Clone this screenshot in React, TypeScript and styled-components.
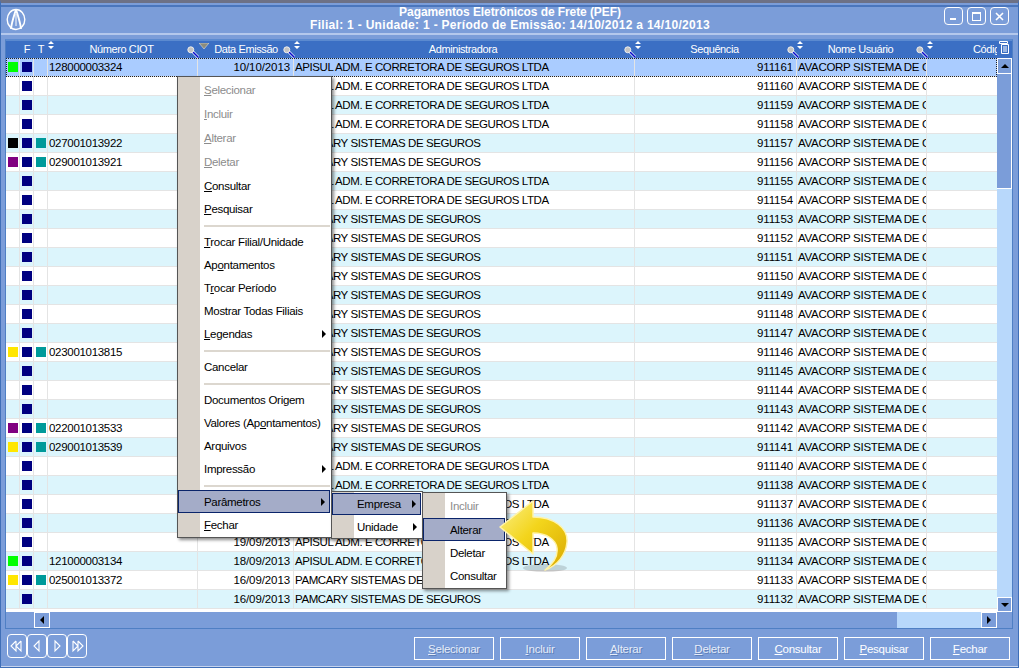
import React from "react";
import styled, { createGlobalStyle } from "styled-components";

const GlobalStyle = createGlobalStyle`
  html, body {
    margin: 0;
    padding: 0;
    background: #7b9dd9;
    overflow: hidden;
  }
  * {
    box-sizing: border-box;
  }
`;

const GRID_COLUMNS = "14px 14px 14px 150px 96px 341px 162px 130px 70px";
const FONT = `"Liberation Sans", Arial, sans-serif`;

type Row = {
  ciot?: string;
  date: string;
  admin: "A" | "P";
  seq: number;
  flag?: string;
  teal?: boolean;
};

const ADMIN = {
  A: "APISUL ADM. E CORRETORA DE SEGUROS LTDA",
  P: "PAMCARY SISTEMAS DE SEGUROS",
};

const rows: Row[] = [
  { ciot: "128000003324", date: "10/10/2013", admin: "A", seq: 911161, flag: "#00ff00" },
  { date: "10/10/2013", admin: "A", seq: 911160 },
  { date: "10/10/2013", admin: "A", seq: 911159 },
  { date: "10/10/2013", admin: "A", seq: 911158 },
  { ciot: "027001013922", date: "10/10/2013", admin: "P", seq: 911157, flag: "#000000", teal: true },
  { ciot: "029001013921", date: "10/10/2013", admin: "P", seq: 911156, flag: "#800080", teal: true },
  { date: "09/10/2013", admin: "A", seq: 911155 },
  { date: "09/10/2013", admin: "A", seq: 911154 },
  { date: "09/10/2013", admin: "P", seq: 911153 },
  { date: "09/10/2013", admin: "P", seq: 911152 },
  { date: "09/10/2013", admin: "P", seq: 911151 },
  { date: "09/10/2013", admin: "P", seq: 911150 },
  { date: "09/10/2013", admin: "P", seq: 911149 },
  { date: "09/10/2013", admin: "P", seq: 911148 },
  { date: "09/10/2013", admin: "P", seq: 911147 },
  { ciot: "023001013815", date: "09/10/2013", admin: "P", seq: 911146, flag: "#ffe600", teal: true },
  { date: "09/10/2013", admin: "P", seq: 911145 },
  { date: "09/10/2013", admin: "P", seq: 911144 },
  { date: "09/10/2013", admin: "P", seq: 911143 },
  { ciot: "022001013533", date: "09/10/2013", admin: "P", seq: 911142, flag: "#800080", teal: true },
  { ciot: "029001013539", date: "09/10/2013", admin: "P", seq: 911141, flag: "#ffe600", teal: true },
  { date: "19/09/2013", admin: "A", seq: 911140 },
  { date: "19/09/2013", admin: "A", seq: 911138 },
  { date: "19/09/2013", admin: "A", seq: 911137 },
  { date: "19/09/2013", admin: "A", seq: 911136 },
  { date: "19/09/2013", admin: "A", seq: 911135 },
  { ciot: "121000003134", date: "18/09/2013", admin: "A", seq: 911134, flag: "#00ff00" },
  { ciot: "025001013372", date: "16/09/2013", admin: "P", seq: 911133, flag: "#ffe600", teal: true },
  { date: "16/09/2013", admin: "P", seq: 911132 },
];

const Page = styled.div`
  position: relative;
  width: 1019px;
  height: 668px;
  display: flex;
  flex-direction: column;
  background: #7b9dd9;
  border: 1px solid #3f6fb8;
  border-top: 3px solid #6d7186;
  border-bottom: 1px solid #3f6fb8;
  box-shadow: inset 0 -1px 0 #c6d4ee;
  font-family: ${FONT};
  overflow: hidden;
`;

const TitleBar = styled.header`
  height: 30px;
  flex: none;
  margin-top: 2px;
  padding: 0 9px 0 5px;
  display: flex;
  align-items: flex-start;
  justify-content: space-between;
  border-top: 2px solid #4a76bd;
  border-bottom: 2px solid #b4c8ec;
`;

const LogoSlot = styled.div`
  width: 20px;
  height: 23px;
  margin-top: 1px;
  flex: none;
  line-height: 0;
`;

const TitleText = styled.div`
  flex: 1;
  padding: 0 0 0 50px;
  margin-top: -1px;
  text-align: center;
  color: #fff;
  font-size: 12px;
  font-weight: 700;
  line-height: 13px;
`;

const TitleLine = styled.div<{ $spacing: number }>`
  letter-spacing: ${(p) => p.$spacing}px;
  white-space: nowrap;
`;

const WindowButtons = styled.div`
  display: flex;
  gap: 4px;
`;

const WindowButton = styled.button`
  width: 19px;
  height: 18px;
  padding: 0;
  display: flex;
  align-items: center;
  justify-content: center;
  background: transparent;
  border: 1px solid #fff;
  border-radius: 4px;
`;

const GridFrame = styled.section`
  margin: 4px 5px 0 4px;
  height: 590px;
  flex: none;
  display: flex;
  flex-direction: column;
  border: 1px solid #4f7fc4;
  border-top: 2px solid #5b8ad0;
`;

const GridBody = styled.div`
  height: 571px;
  flex: none;
  display: flex;
`;

const Table = styled.div`
  width: 991px;
  overflow: hidden;
  display: flex;
  flex-direction: column;
  background: #fff;
  border-bottom: 2px solid #fff;
`;

const HeaderRow = styled.div`
  height: 17px;
  flex: none;
  display: grid;
  grid-template-columns: ${GRID_COLUMNS};
  background: #3b6fc4;
  color: #fff;
  font-size: 11px;
  line-height: 17px;
`;

const HeaderCell = styled.div`
  position: relative;
  text-align: center;
  white-space: nowrap;
  letter-spacing: -0.4px;
`;

const ColumnCell = styled(HeaderCell)`
  padding-right: 3px;
`;

const ClippedHeaderCell = styled(HeaderCell)`
  overflow: hidden;
  text-align: left;
  padding-left: 46px;
`;

const HeaderMark = styled.span<{ $left: number; $top?: number }>`
  position: absolute;
  top: ${(p) => p.$top ?? 0}px;
  left: ${(p) => p.$left}px;
  line-height: 0;
  z-index: 1;
`;

const BodyRows = styled.div`
  flex: 1;
  overflow: hidden;
  background: #fff;
`;

const DataRow = styled.div<{ $alt: boolean; $selected: boolean }>`
  height: 19px;
  display: grid;
  grid-template-columns: ${GRID_COLUMNS};
  font-size: 11.5px;
  line-height: 18px;
  color: #000;
  background: ${(p) => (p.$selected ? "#aaccff" : p.$alt ? "#dcf5fc" : "#fff")};
  outline: ${(p) => (p.$selected ? "1px dotted #222" : "none")};
  outline-offset: -1px;
`;

const Cell = styled.div<{ $right?: boolean; $plain?: boolean }>`
  border-right: ${(p) => (p.$plain ? "none" : "1px solid #e4e4e4")};
  border-bottom: 1px solid #e4e4e4;
  padding: 0 ${(p) => (p.$right ? "3px" : "0")} 0 1px;
  text-align: ${(p) => (p.$right ? "right" : "left")};
  white-space: nowrap;
  overflow: hidden;
  letter-spacing: ${(p) => (p.$right ? "-0.1px" : "-0.3px")};
`;

const AdminCell = styled(Cell)`
  letter-spacing: -0.42px;
`;

const SwatchCell = styled.div`
  border-right: 1px solid #e4e4e4;
  border-bottom: 1px solid #e4e4e4;
  display: flex;
  align-items: center;
  justify-content: center;
`;

const Swatch = styled.span<{ $color: string }>`
  width: 10px;
  height: 10px;
  background: ${(p) => p.$color};
`;

const VScroll = styled.div`
  width: 15px;
  flex: none;
  display: flex;
  flex-direction: column;
  background: #7b9dd9;
`;

const VScrollHeader = styled.div`
  height: 17px;
  flex: none;
  padding: 0 0 0 2px;
  background: #3b6fc4;
  line-height: 0;
`;

const ScrollArrow = styled.div<{ $w?: number; $h?: number }>`
  width: ${(p) => p.$w ?? 15}px;
  height: ${(p) => p.$h ?? 16}px;
  flex: none;
  display: flex;
  align-items: center;
  justify-content: center;
  background: #7b9dd9;
  border: 1px solid #fff;
`;

const VBar = styled.div`
  flex: 1;
  display: flex;
  flex-direction: column;
  background: #b8d8fb;
`;

const VThumb = styled.div`
  height: 115px;
  flex: none;
  background: #7b9dd9;
  border-right: 1px solid #fff;
  border-bottom: 1px solid #fff;
`;

const HScroll = styled.div`
  height: 16px;
  flex: none;
  display: flex;
  background: #7b9dd9;
`;

const HSpacer = styled.div`
  width: 28px;
  flex: none;
`;

const HThumb = styled.div`
  width: 847px;
  flex: none;
`;

const HTrack = styled.div`
  width: 84px;
  flex: none;
  background: #b8d8fb;
`;

const HCorner = styled.div`
  flex: 1;
`;

const Footer = styled.footer`
  flex: 1;
  display: flex;
  align-items: flex-start;
  justify-content: space-between;
  padding: 5px 8px 0 6px;
`;

const Pager = styled.div`
  display: flex;
`;

const PagerButton = styled.button`
  width: 20px;
  height: 24px;
  padding: 0;
  display: flex;
  align-items: center;
  justify-content: center;
  background: transparent;
  border: 1px solid #fff;
  border-radius: 4px;
`;

const Actions = styled.div`
  display: flex;
  gap: 6px;
  margin-top: 3px;
`;

const ActionButton = styled.button<{ $disabled?: boolean }>`
  width: 80px;
  height: 23px;
  padding: 0;
  background: transparent;
  border: 1px solid #fff;
  color: ${(p) => (p.$disabled ? "#e6edfa" : "#fff")};
  font-family: ${FONT};
  font-size: 11.5px;
  letter-spacing: -0.25px;
  text-shadow: ${(p) => (p.$disabled ? "1px 1px 0 #5e7fb8" : "none")};
`;

const Menu = styled.div<{ $x: number; $y: number; $w: number; $h: number; $z: number }>`
  position: absolute;
  left: ${(p) => p.$x}px;
  top: ${(p) => p.$y}px;
  width: ${(p) => p.$w}px;
  height: ${(p) => p.$h}px;
  z-index: ${(p) => p.$z};
  display: flex;
  flex-direction: column;
  padding: 1px 1px 0;
  background: linear-gradient(90deg, #d8d2ca 22px, #fff 22px);
  border: 1px solid #555;
  box-shadow: 2px 2px 3px rgba(0, 0, 0, 0.45);
  font-size: 11.5px;
  letter-spacing: -0.3px;
`;

const Item = styled.div<{ $h: number; $pad: number; $disabled?: boolean; $active?: boolean; $pt?: number }>`
  position: relative;
  height: ${(p) => p.$h}px;
  flex: none;
  display: flex;
  align-items: center;
  padding-left: ${(p) => p.$pad}px;
  padding-top: ${(p) => p.$pt ?? 0}px;
  color: ${(p) => (p.$disabled ? "#8c8c8c" : "#000")};
  background: ${(p) => (p.$active ? "#a4acc8" : "transparent")};
  border: ${(p) => (p.$active ? "1px solid #0a246a" : "none")};
  margin-left: ${(p) => (p.$active ? "-1px" : "0")};
  white-space: nowrap;
`;

const Separator = styled.div`
  height: 10px;
  flex: none;
  padding-top: 5px;
  margin-left: 25px;
  &::after {
    content: "";
    display: block;
    height: 2px;
    background: #dcd7cf;
  }
`;

const Caret = styled.span`
  position: absolute;
  right: 4px;
  top: 50%;
  margin-top: -4px;
  width: 0;
  height: 0;
  border-left: 4px solid #000;
  border-top: 4px solid transparent;
  border-bottom: 4px solid transparent;
`;

const ArrowMark = styled.svg`
  position: absolute;
  left: 498px;
  top: 497px;
  z-index: 5;
`;

const Logo = () => (
  <svg width="20" height="23" viewBox="0 0 20 23" fill="none" stroke="#fff">
    <ellipse cx="10" cy="11.5" rx="8.8" ry="10" strokeWidth="1.4" />
    <path d="M10 1.5 C8 8 5.5 15 5 21 M10 1.5 C12 8 14.5 15 15 21" strokeWidth="1.9" />
    <path d="M10 6 V18" strokeWidth="1" />
  </svg>
);

const SortMark = () => (
  <svg width="6" height="8" viewBox="0 0 6 8" fill="#fff">
    <path d="M3 0 L6 3 H0 Z M0 5 H6 L3 8 Z" />
  </svg>
);

const Magnifier = () => (
  <svg width="12" height="12" viewBox="0 0 12 12">
    <line x1="5" y1="5" x2="11.5" y2="11.5" stroke="#dfe8ff" strokeWidth="3" />
    <line x1="5" y1="5" x2="11.5" y2="11.5" stroke="#0a0ac8" strokeWidth="1.5" />
    <circle cx="3.8" cy="3.8" r="3" fill="#c4c4c4" stroke="#eee" strokeWidth="1" />
  </svg>
);

const OrderMark = () => (
  <svg width="11" height="13" viewBox="0 0 11 13" fill="none" stroke="#fff">
    <path d="M0.5 0.5 H8.5 V2.5 H0.5 Z" fill="#3b6fc4" />
    <path d="M2.5 3.5 H9.5 V12.5 H2.5 Z" fill="#3b6fc4" />
    <path d="M4 6 H8 M4 8 H8 M4 10 H8" />
  </svg>
);

const Triangle = ({ dir }: { dir: "up" | "down" | "left" | "right" }) => {
  const d = {
    up: "M0 5 L4 1 L8 5 Z",
    down: "M0 1 H8 L4 5 Z",
    left: "M5 0 V8 L1 4 Z",
    right: "M1 0 V8 L5 4 Z",
  }[dir];
  const vertical = dir === "up" || dir === "down";
  return (
    <svg width={vertical ? 8 : 6} height={vertical ? 6 : 8} viewBox={vertical ? "0 0 8 6" : "0 0 6 8"} fill="#000">
      <path d={d} />
    </svg>
  );
};

const PagerIcon = ({ d }: { d: string }) => (
  <svg width="16" height="14" viewBox="0 0 16 14" fill="none" stroke="#fff" strokeWidth="1.1">
    <path d={d} />
  </svg>
);

function Mnemonic({ text, at = 0 }: { text: string; at?: number }) {
  return (
    <span>
      {text.slice(0, at)}
      <u>{text[at]}</u>
      {text.slice(at + 1)}
    </span>
  );
}

export default function App() {
  return (
    <Page>
      <GlobalStyle />
      <TitleBar>
        <LogoSlot><Logo /></LogoSlot>
        <TitleText>
          <TitleLine $spacing={-0.08}>Pagamentos Eletrônicos de Frete (PEF)</TitleLine>
          <TitleLine $spacing={0.3}>Filial: 1 - Unidade: 1 - Período de Emissão: 14/10/2012 a 14/10/2013</TitleLine>
        </TitleText>
        <WindowButtons>
          <WindowButton>
            <svg width="9" height="9" viewBox="0 0 9 9"><rect x="1" y="6" width="6" height="2" fill="#fff" /></svg>
          </WindowButton>
          <WindowButton>
            <svg width="11" height="11" viewBox="0 0 11 11" fill="none" stroke="#fff"><rect x="1.5" y="1.5" width="8" height="8" /><line x1="1" y1="2" x2="10" y2="2" strokeWidth="2" /></svg>
          </WindowButton>
          <WindowButton>
            <svg width="9" height="9" viewBox="0 0 9 9" stroke="#fff" strokeWidth="1.6"><path d="M1 1 L8 8 M8 1 L1 8" /></svg>
          </WindowButton>
        </WindowButtons>
      </TitleBar>

      <GridFrame>
        <GridBody>
          <Table>
            <HeaderRow>
              <HeaderCell />
              <HeaderCell>F</HeaderCell>
              <HeaderCell>
                T
                <HeaderMark $left={14}><SortMark /></HeaderMark>
              </HeaderCell>
              <ColumnCell>
                Número CIOT
                <HeaderMark $left={139} $top={5}><Magnifier /></HeaderMark>
              </ColumnCell>
              <HeaderCell>
                Data Emissão
                <HeaderMark $left={1} $top={2}>
                  <svg width="10" height="6" viewBox="0 0 10 6"><path d="M0 0 H10 L5 6 Z" fill="#8c8c7c" stroke="#ddd" strokeWidth="0.6" /></svg>
                </HeaderMark>
                <HeaderMark $left={85} $top={5}><Magnifier /></HeaderMark>
              </HeaderCell>
              <ColumnCell>
                <HeaderMark $left={0}><SortMark /></HeaderMark>
                Administradora
                <HeaderMark $left={330} $top={5}><Magnifier /></HeaderMark>
              </ColumnCell>
              <ColumnCell>
                <HeaderMark $left={0}><SortMark /></HeaderMark>
                Sequência
                <HeaderMark $left={152} $top={5}><Magnifier /></HeaderMark>
              </ColumnCell>
              <ColumnCell>
                <HeaderMark $left={0}><SortMark /></HeaderMark>
                Nome Usuário
                <HeaderMark $left={119} $top={5}><Magnifier /></HeaderMark>
              </ColumnCell>
              <ClippedHeaderCell>
                <HeaderMark $left={0}><SortMark /></HeaderMark>
                Código
              </ClippedHeaderCell>
            </HeaderRow>
            <BodyRows>
              {rows.map((r, i) => (
                <DataRow key={r.seq} $alt={i % 2 === 0} $selected={i === 0}>
                  <SwatchCell>{r.flag && <Swatch $color={r.flag} />}</SwatchCell>
                  <SwatchCell><Swatch $color="#000080" /></SwatchCell>
                  <SwatchCell>{r.teal && <Swatch $color="#009a9a" />}</SwatchCell>
                  <Cell>{r.ciot}</Cell>
                  <Cell $right>{r.date}</Cell>
                  <AdminCell>{ADMIN[r.admin]}</AdminCell>
                  <Cell $right>{r.seq}</Cell>
                  <Cell>AVACORP SISTEMA DE C</Cell>
                  <Cell $plain />
                </DataRow>
              ))}
            </BodyRows>
          </Table>
          <VScroll>
            <VScrollHeader><OrderMark /></VScrollHeader>
            <ScrollArrow><Triangle dir="up" /></ScrollArrow>
            <VBar>
              <VThumb />
            </VBar>
            <ScrollArrow $h={15}><Triangle dir="down" /></ScrollArrow>
          </VScroll>
        </GridBody>
        <HScroll>
          <HSpacer />
          <ScrollArrow $w={16}><Triangle dir="left" /></ScrollArrow>
          <HThumb />
          <HTrack />
          <ScrollArrow $w={16}><Triangle dir="right" /></ScrollArrow>
          <HCorner />
        </HScroll>
      </GridFrame>

      <Footer>
        <Pager>
          <PagerButton><PagerIcon d="M7 2 L2 7 L7 12 V2 M12 2 L7 7 L12 12 V2" /></PagerButton>
          <PagerButton><PagerIcon d="M10 2 L5 7 L10 12 Z" /></PagerButton>
          <PagerButton><PagerIcon d="M6 2 L11 7 L6 12 Z" /></PagerButton>
          <PagerButton><PagerIcon d="M4 2 L9 7 L4 12 V2 M9 2 L14 7 L9 12 V2" /></PagerButton>
        </Pager>
        <Actions>
          <ActionButton $disabled><Mnemonic text="Selecionar" /></ActionButton>
          <ActionButton $disabled><Mnemonic text="Incluir" /></ActionButton>
          <ActionButton $disabled><Mnemonic text="Alterar" /></ActionButton>
          <ActionButton $disabled><Mnemonic text="Deletar" /></ActionButton>
          <ActionButton><Mnemonic text="Consultar" /></ActionButton>
          <ActionButton><Mnemonic text="Pesquisar" /></ActionButton>
          <ActionButton><Mnemonic text="Fechar" /></ActionButton>
        </Actions>
      </Footer>

      <Menu $x={176} $y={73} $w={155} $h={462} $z={2}>
        <Item $pad={25} $h={24} $disabled><Mnemonic text="Selecionar" /></Item>
        <Item $pad={25} $h={24} $disabled><Mnemonic text="Incluir" /></Item>
        <Item $pad={25} $h={24} $disabled><Mnemonic text="Alterar" /></Item>
        <Item $pad={25} $h={24} $disabled><Mnemonic text="Deletar" /></Item>
        <Item $pad={25} $h={24}><Mnemonic text="Consultar" /></Item>
        <Item $pad={25} $h={22}><Mnemonic text="Pesquisar" /></Item>
        <Separator />
        <Item $pad={25} $h={23}><Mnemonic text="Trocar Filial/Unidade" /></Item>
        <Item $pad={25} $h={23}><Mnemonic text="Apontamentos" at={2} /></Item>
        <Item $pad={25} $h={23}><Mnemonic text="Trocar Período" at={1} /></Item>
        <Item $pad={25} $h={23}>Mostrar Todas Filiais</Item>
        <Item $pad={25} $h={23}><Mnemonic text="Legendas" /><Caret /></Item>
        <Separator />
        <Item $pad={25} $h={23}>Cancelar</Item>
        <Separator />
        <Item $pad={25} $h={23}>Documentos Origem</Item>
        <Item $pad={25} $h={23}><Mnemonic text="Valores (Apontamentos)" at={11} /></Item>
        <Item $pad={25} $h={23}>Arquivos</Item>
        <Item $pad={25} $h={23}>Impressão<Caret /></Item>
        <Separator />
        <Item $pad={25} $h={23} $pt={1} $active>Parâmetros<Caret /></Item>
        <Item $pad={25} $h={24}><Mnemonic text="Fechar" /></Item>
      </Menu>

      <Menu $x={330} $y={488} $w={92} $h={48} $z={3}>
        <Item $pad={24} $h={22} $active>Empresa<Caret /></Item>
        <Item $pad={24} $h={23} $pt={1}>Unidade<Caret /></Item>
      </Menu>

      <Menu $x={421} $y={489} $w={85} $h={97} $z={4}>
        <Item $pad={26} $h={24} $disabled>Incluir</Item>
        <Item $pad={26} $h={23} $pt={1} $active>Alterar</Item>
        <Item $pad={26} $h={23} $pt={1}>Deletar</Item>
        <Item $pad={26} $h={23} $pt={1}>Consultar</Item>
      </Menu>

      <ArrowMark width="76" height="76" viewBox="0 0 76 76">
        <defs>
          <linearGradient id="gold" x1="0" y1="0" x2="1" y2="1">
            <stop offset="0" stopColor="#fbf08a" />
            <stop offset="0.45" stopColor="#f3d51c" />
            <stop offset="1" stopColor="#d9a900" />
          </linearGradient>
        </defs>
        <ellipse cx="46" cy="68" rx="22" ry="4" fill="rgba(0,0,0,0.14)" />
        <path
          d="M1 27 L34 1 V17 C55 17 69 28 68 42 C67 55 58 66 46 70 C54 64 59 56 58 48 C57 40 48 33 34 33 V54 Z"
          fill="url(#gold)"
          stroke="#fff3a8"
          strokeWidth="1.5"
          strokeLinejoin="round"
        />
      </ArrowMark>
    </Page>
  );
}
